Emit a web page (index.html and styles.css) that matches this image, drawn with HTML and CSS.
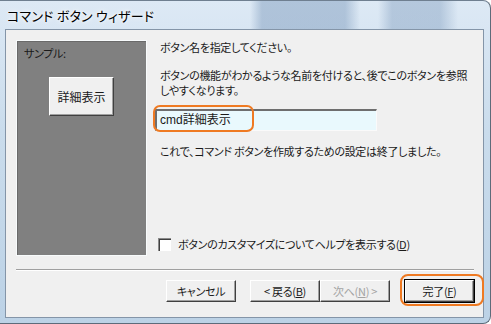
FILE: index.html
```html
<!DOCTYPE html>
<html>

<head>
    <meta http-equiv="Content-Type" content="text/html;charset=UTF-8" />
    <title>コマンド ボタン ウィザード</title>
    <link rel="stylesheet" href="styles.css">
</head>

<body>
    <div class="window">
        <div class="titlebar">
            <span class="title">コマンド ボタン ウィザード</span>
        </div>
        <div class="client">
            <div class="main">
                <div class="sample">
                    <p class="sample_label">サンプル:</p>
                    <div class="sample_btn">詳細表示</div>
                </div>
                <div class="form">
                    <p class="lead">ボタン名を指定してください。</p>
                    <p class="desc">ボタンの機能がわかるような名前を付けると、後でこのボタンを参照<br>しやすくなります。</p>
                    <div class="name_box">
                        <span class="name_text">cmd詳細表示</span>
                        <span class="mark mark_name"></span>
                    </div>
                    <p class="done">これで、コマンド ボタンを作成するための設定は終了しました。</p>
                    <label class="check_row">
                        <span class="check"></span>
                        <span>ボタンのカスタマイズについてヘルプを表示する(<u>D</u>)</span>
                    </label>
                </div>
            </div>
            <div class="sep"></div>
            <div class="buttons">
                <div class="btn">キャンセル</div>
                <div class="btn btn_back">&lt; 戻る(<u>B</u>)</div>
                <div class="btn btn_disabled">次へ(<u>N</u>) &gt;</div>
                <div class="btn btn_default">
                    完了(<u>F</u>)
                    <span class="mark mark_finish"></span>
                </div>
            </div>
        </div>
    </div>
</body>

</html>
```

FILE: styles.css
```css
* {
    margin: 0;
    padding: 0;
    box-sizing: border-box;
}

html,
body {
    width: 491px;
    height: 324px;
    overflow: hidden;
}

body {
    font-size: 11px;
    font-family: "Noto Sans CJK JP", "Liberation Sans", sans-serif;
    font-feature-settings: "palt";
    letter-spacing: -0.3px;
    white-space: nowrap;
    color: #1a1a1a;
    background: #fff;
}

.window {
    width: 491px;
    height: 324px;
    display: flex;
    flex-direction: column;
    border-top: 1px solid #6f7f90;
    border-right: 1px solid #5d6b7a;
    border-bottom: 1px solid #5d6b7a;
    border-radius: 0 8px 8px 0;
    background:
        linear-gradient(90deg, transparent 250px, rgba(120, 150, 185, .45) 262px, rgba(120, 150, 185, .45) 345px, transparent 360px, transparent 378px, rgba(120, 150, 185, .4) 392px, rgba(120, 150, 185, .4) 440px, transparent 458px) 0 0 / 100% 28px no-repeat,
        linear-gradient(180deg, #dde9f5 0, #cadcec 40%, #bcd2e6 100%);
}

.titlebar {
    height: 28px;
    display: flex;
    align-items: center;
    padding-left: 7px;
}

.title {
    font-size: 13px;
    letter-spacing: 0.2px;
    color: #000;
    text-shadow: 0 0 6px #fff, 0 0 3px #fff;
}

.client {
    flex: 1;
    margin: 0 6px 5px 5px;
    border: 1px solid #8495a8;
    background: #f0f0f0;
    display: flex;
    flex-direction: column;
}

.main {
    display: flex;
    padding: 10px 0 0 10px;
}

.sample {
    width: 131px;
    height: 216px;
    background: #808080;
    border: 1px solid #f8fbfc;
    box-shadow: inset 1px 1px 0 #6a6a6a;
    padding: 5px 0 0 7px;
}

.sample_label {
    line-height: 14px;
}

.sample_btn {
    width: 65px;
    height: 39px;
    margin: 17px 0 0 25px;
    background: #f0f0f0;
    border: 1px solid;
    border-color: #fff #404040 #404040 #fff;
    box-shadow: inset -1px -1px 0 #a0a0a0;
    display: flex;
    align-items: center;
    justify-content: center;
    font-size: 12px;
    letter-spacing: 0;
}

.form {
    flex: 1;
    margin-left: 13px;
    height: 216px;
    display: flex;
    flex-direction: column;
    line-height: 15px;
    padding-bottom: 4px;
}

.desc {
    margin-top: 13px;
}

.name_box {
    position: relative;
    width: 222px;
    height: 22px;
    margin: 11px 0 0 -5px;
    background: #e9f9fd;
    border-top: 2px solid #6e6e6e;
    border-left: 2px solid #6e6e6e;
    border-right: 1px solid #fafafa;
    border-bottom: 1px solid #fafafa;
    display: flex;
    align-items: center;
    padding-left: 3px;
}

.name_text {
    font-family: "Liberation Sans", "Noto Sans CJK JP", sans-serif;
    font-size: 12px;
    letter-spacing: 0;
}

.mark {
    position: absolute;
    border: 2px solid #ef7a22;
    border-radius: 7px;
}

.mark_name {
    left: -4px;
    top: -6px;
    width: 101px;
    height: 27px;
}

.done {
    margin-top: 13px;
}

.check_row {
    margin-top: auto;
    display: flex;
    align-items: center;
    gap: 7px;
    margin-left: -2px;
}

.check {
    width: 13px;
    height: 13px;
    background: #fff;
    border-top: 1px solid #8a8a8a;
    border-left: 1px solid #8a8a8a;
    box-shadow: inset 1px 1px 0 #404040;
}

.sep {
    height: 2px;
    margin: 13px 9px 0 10px;
    border-top: 1px solid #a0a0a0;
    border-bottom: 1px solid #fff;
}

.buttons {
    display: flex;
    justify-content: flex-end;
    padding-right: 9px;
    margin-top: 9px;
}

.btn {
    position: relative;
    width: 70px;
    height: 22px;
    background: #f0f0f0;
    border: 1px solid;
    border-color: #fff #404040 #404040 #fff;
    box-shadow: inset -1px -1px 0 #a0a0a0;
    display: flex;
    align-items: center;
    justify-content: center;
}

.btn_back {
    margin-left: 14px;
}

.btn_disabled {
    color: #a3a3a3;
}

.btn_default {
    margin-left: 15px;
    width: 69px;
    outline: 1px solid #000;
}

.mark_finish {
    left: -6px;
    top: -7px;
    width: 84px;
    height: 32px;
    border-radius: 8px;
}
```
